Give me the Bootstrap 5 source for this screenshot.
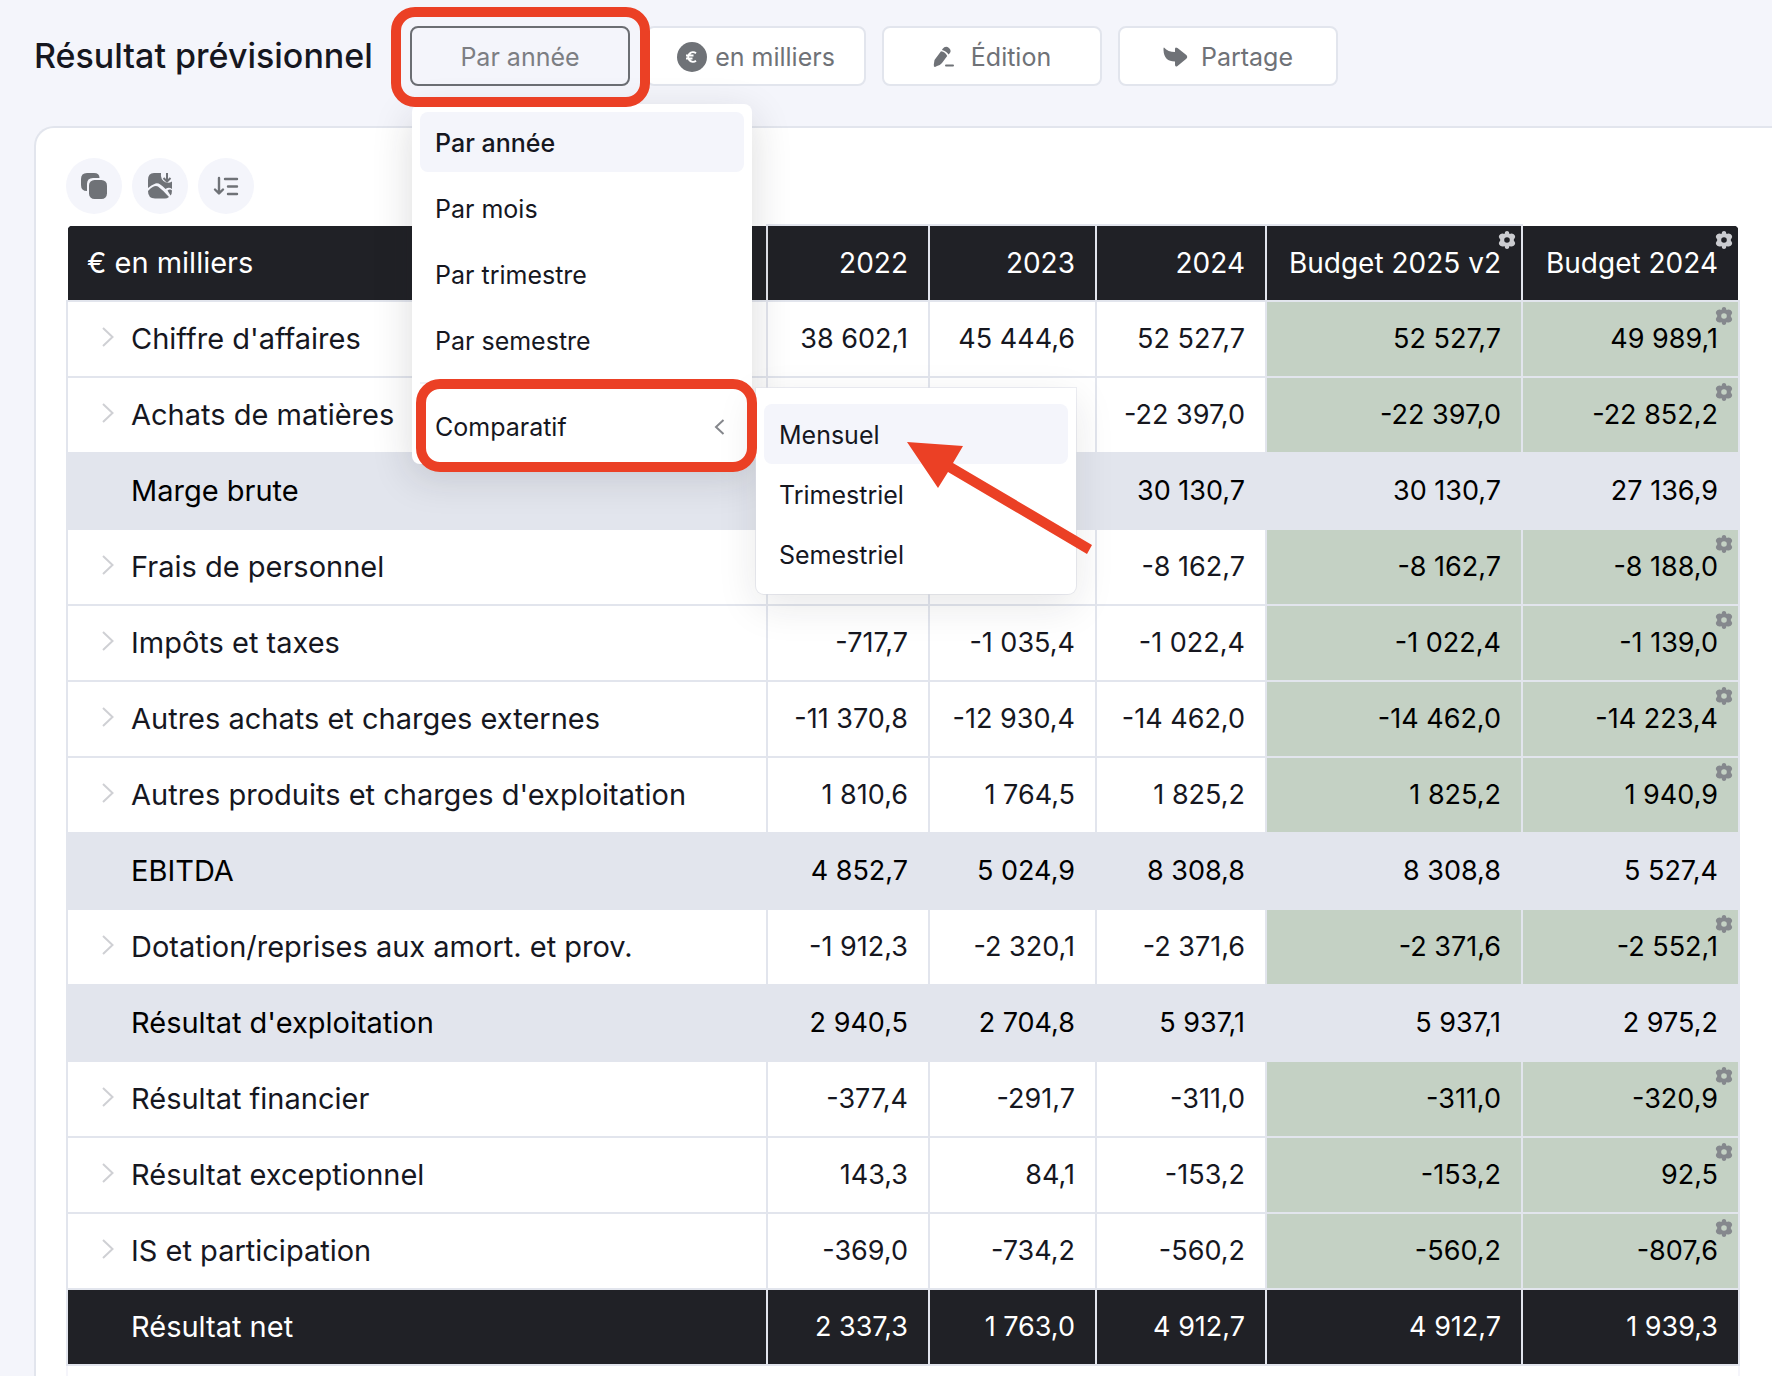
<!DOCTYPE html>
<html lang="fr">
<head>
<meta charset="utf-8">
<meta name="viewport" content="width=device-width, initial-scale=1">
<title>Résultat prévisionnel</title>
<link href="https://cdn.jsdelivr.net/npm/bootstrap@5.3.0/dist/css/bootstrap.min.css" rel="stylesheet">
<style>
:root{--ink:#16171f;--dark:#202126;--line:#e2e5ed;--soft:#f4f5fb;--grey:#6f7277;--red:#eb4025}
body{background:var(--soft);color:var(--ink);font-family:Inter,"Open Sans",sans-serif;font-size:25px;overflow-x:hidden}
.topbar{padding:26px 34px 40px}
.page-title{font-size:34px;line-height:60px;font-weight:500;margin:0 40px 0 0;width:336px;white-space:nowrap}
.tool-btn{width:220px;height:60px;border:2px solid var(--line);border-radius:8px;background:#fff;color:var(--grey);font-size:25px;line-height:36px;padding:2px 0 0;white-space:nowrap}
.tool-btn.is-open,.tool-btn.is-open:hover{background:var(--soft);border-color:#6b6e73;color:#7c7e83}
.callout{position:absolute;border:10px solid var(--red);border-radius:24px;pointer-events:none;z-index:5}
.callout-btn{inset:-19px -20px -21px -19px}
.callout-item{inset:-17px -13px -16px -4px}
.menu-panel{position:absolute;display:block;background:#fff;border:0;border-radius:8px;padding:8px;margin:0;box-shadow:0 12px 40px rgba(30,32,40,.16);list-style:none}
.menu-main{top:78px;left:2px;width:340px;z-index:4}
.menu-sub{top:-8px;left:336px;width:320px;padding:16px 8px 10px;border-radius:0 0 8px 8px;box-shadow:0 12px 40px rgba(30,32,40,.1),0 0 0 1px rgba(226,229,237,.6);z-index:4}
.menu-link{display:flex;align-items:center;height:60px;padding:2px 19px 0 15px;border-radius:8px;color:var(--ink);font-size:25px;line-height:36px;text-decoration:none}
.menu-main>li+li{margin-top:6px}
.menu-link.is-active{background:var(--soft)}
.menu-rule{height:2px;background:#f0f1f6}
.menu-main>li.menu-rule,.menu-main>li.menu-last{margin-top:12px}
.pointer{position:absolute;left:150px;top:52px;z-index:6;pointer-events:none}
.panel{margin-left:34px;border:2px solid var(--line);border-right:0;border-bottom:0;border-radius:20px 0 0 0;background:#fff;padding:30px 32px 0 30px}
.round-btn{width:56px;height:56px;border:0;border-radius:50%;background:var(--soft);color:var(--grey);padding:0;display:flex;align-items:center;justify-content:center}
.table-box{margin-top:10px;border-radius:10px 10px 0 0;overflow:hidden;padding-bottom:10px;box-shadow:inset 2px 0 #f5f5fb,inset -2px 0 #f5f5fb}
.fin{width:100%;table-layout:fixed;border-collapse:collapse;font-size:27px;line-height:40px}
.fin th,.fin td{border:2px solid var(--line);height:76px;padding:0 20px;font-weight:400;white-space:nowrap;text-align:right;position:relative;vertical-align:middle}
.fin th:first-child{text-align:left;padding-left:63px;font-size:29px}
.fin tbody td:nth-child(n+5){background:#c4d1c4;color:#000}
.fin thead th{background:var(--dark);color:#fff;font-size:28px}
.fin thead th:first-child{padding-left:19px;border-top-color:#fff;border-left-color:#fff}
.fin thead th:last-child{border-top-color:#fff;border-right-color:#fff}
.fin .sum th,.fin .sum td:nth-child(n){background:var(--line);color:#000}
.fin .net th,.fin .net td:nth-child(n){background:var(--dark);color:#fff}
.chev{position:absolute;left:33px;top:24px;color:#cfd0d4}
.gear{position:absolute;right:5px;top:5px;color:#85888d}
thead .gear{color:#cbccd0}
.c1{width:162px}.c2{width:167px}.c3{width:170px}.c4{width:256px}.c5{width:217px}
</style>
</head>
<body>
<svg class="d-none" aria-hidden="true">
<symbol id="gear" viewBox="0 0 18 18"><path fill="currentColor" fill-rule="evenodd" d="M7.2.8Q9-.6 10.8.8L11.5 3Q13.500 2 15.400 2.900Q17.500 4.200 17.100 6.300L15.600 9L17.100 11.700Q17.500 13.800 15.400 15.100Q13.500 16 11.500 15L10.800 17.200Q9 18.600 7.200 17.200L6.500 15Q4.500 16 2.600 15.100Q.5 13.800 .9 11.700L2.400 9L.9 6.300Q.5 4.200 2.600 2.900Q4.500 2 6.500 3ZM9 6.200A2.800 2.800 0 1 0 9 11.800A2.800 2.800 0 1 0 9 6.200Z"/></symbol>
<symbol id="chev" viewBox="0 0 14 22"><path d="M2 2L11.500 11L2 20" fill="none" stroke="currentColor" stroke-width="2"/></symbol>
</svg>

<header class="topbar d-flex align-items-center">
  <h1 class="page-title">Résultat prévisionnel</h1>
  <div class="d-flex gap-3">
    <div class="position-relative">
      <button type="button" class="btn tool-btn is-open" aria-expanded="true">Par année</button>
      <ul class="menu-panel menu-main">
        <li><a class="menu-link is-active fw-medium" href="#">Par année</a></li>
        <li><a class="menu-link" href="#">Par mois</a></li>
        <li><a class="menu-link" href="#">Par trimestre</a></li>
        <li><a class="menu-link" href="#">Par semestre</a></li>
        <li class="menu-rule"></li>
        <li class="menu-last position-relative">
          <a class="menu-link justify-content-between" href="#">Comparatif
            <svg width="11" height="18" viewBox="0 0 11 18"><path d="M9.500 2L2 9L9.500 16" fill="none" stroke="#85878c" stroke-width="2"/></svg>
          </a>
          <ul class="menu-panel menu-sub">
            <li><a class="menu-link is-active" href="#">Mensuel</a></li>
            <li><a class="menu-link" href="#">Trimestriel</a></li>
            <li><a class="menu-link" href="#">Semestriel</a></li>
            <li class="pointer"><svg class="d-block" width="190" height="116" viewBox="0 0 190 116"><path d="M1 2L57 6L47 23L186 105L181 114L42 32L32 48Z" fill="#eb4025"/></svg></li>
          </ul>
          <span class="callout callout-item"></span>
        </li>
      </ul>
      <span class="callout callout-btn"></span>
    </div>
    <button type="button" class="btn tool-btn d-flex align-items-center justify-content-center gap-2"><svg width="30" height="30" viewBox="0 0 30 30"><circle cx="15" cy="15" r="15" fill="#6f7277"/><path d="M19 11.200A4.800 4.800 0 1 0 19 18.800M9 13.600H16.500M9 16.400H15.500" fill="none" stroke="#fff" stroke-width="2"/></svg>en milliers</button>
    <button type="button" class="btn tool-btn d-flex align-items-center justify-content-center gap-3"><svg width="22" height="22" viewBox="0 0 22 22" fill="#6f7277"><path d="M9.500 3Q12.500-1 16 2Q19 4.500 16.500 7.500L15.500 8.500Q13.500 5 9 4Z"/><path d="M8 5.200Q12.500 6 14.200 10L9 17Q7 19.500 4 20L2 21Q.5 21 .8 18.500L1.500 14Z"/><rect x="12" y="18.500" width="9" height="2" rx="1"/></svg>Édition</button>
    <button type="button" class="btn tool-btn d-flex align-items-center justify-content-center gap-2"><svg class="me-1" width="26" height="22" viewBox="0 0 26 22"><path d="M1 1.500Q5 6 12 6V3Q12 .5 14.500 2L23 8.800Q25.500 11 23 13L14.500 20Q12 21.500 12 18.500V15.500Q1 15.500 .5 4Q.4 1 1 1.500Z" fill="#6f7277"/></svg>Partage</button>
  </div>
</header>

<main class="panel">
  <div class="d-flex" style="gap:10px">
    <button type="button" class="round-btn" aria-label="Copier"><svg width="28" height="28" viewBox="0 0 28 28" fill="currentColor"><path d="M7 1H14Q19.500 1 19.500 6H13Q7 6 7 12V19Q1 19 1 13V7Q1 1 7 1Z"/><rect x="9" y="8" width="18" height="19" rx="5.500"/></svg></button>
    <button type="button" class="round-btn" aria-label="Exporter en image"><svg width="28" height="28" viewBox="0 0 28 28"><path d="M8 1H15Q14 8 20 10.500Q23 11.500 26 9.500V17Q23 14.500 19.500 17Q13 10 9.500 11.500Q5 13 2 16V8Q2 1 8 1Z" fill="currentColor"/><path d="M2 19Q8 12.500 12 14.500Q18 19 23 25Q21 26.500 19 26.500H9Q2 26.500 2 19Z" fill="currentColor"/><path d="M21.500 18.500Q24 16.500 26 18.500Q26 22 24.500 23.500Z" fill="currentColor"/><path d="M21 1V9M17.500 6L21 9.500L24.500 6" fill="none" stroke="currentColor" stroke-width="2"/></svg></button>
    <button type="button" class="round-btn" aria-label="Trier"><svg width="28" height="22" viewBox="0 0 28 22" fill="none" stroke="currentColor" stroke-width="2.400" stroke-linecap="round" stroke-linejoin="round"><path d="M7 3V18M3 14.500L7 18.500L11 14.500M13 4H25M16 11.500H25M16 19H25"/></svg></button>
  </div>

  <div class="table-box">
  <table class="fin">
    <colgroup><col><col class="c1"><col class="c2"><col class="c3"><col class="c4"><col class="c5"></colgroup>
    <thead>
      <tr><th scope="col">€ en milliers</th><th scope="col">2022</th><th scope="col">2023</th><th scope="col">2024</th><th scope="col">Budget 2025 v2<svg class="gear" width="18" height="18"><use href="#gear"/></svg></th><th scope="col">Budget 2024<svg class="gear" width="18" height="18"><use href="#gear"/></svg></th></tr>
    </thead>
    <tbody>
      <tr><th scope="row"><svg class="chev" width="14" height="22"><use href="#chev"/></svg>Chiffre d'affaires</th><td>38 602,1</td><td>45 444,6</td><td>52 527,7</td><td>52 527,7</td><td>49 989,1<svg class="gear" width="18" height="18"><use href="#gear"/></svg></td></tr>
      <tr><th scope="row"><svg class="chev" width="14" height="22"><use href="#chev"/></svg>Achats de matières</th><td></td><td></td><td>-22 397,0</td><td>-22 397,0</td><td>-22 852,2<svg class="gear" width="18" height="18"><use href="#gear"/></svg></td></tr>
      <tr class="sum"><th scope="row">Marge brute</th><td></td><td></td><td>30 130,7</td><td>30 130,7</td><td>27 136,9</td></tr>
      <tr><th scope="row"><svg class="chev" width="14" height="22"><use href="#chev"/></svg>Frais de personnel</th><td></td><td></td><td>-8 162,7</td><td>-8 162,7</td><td>-8 188,0<svg class="gear" width="18" height="18"><use href="#gear"/></svg></td></tr>
      <tr><th scope="row"><svg class="chev" width="14" height="22"><use href="#chev"/></svg>Impôts et taxes</th><td>-717,7</td><td>-1 035,4</td><td>-1 022,4</td><td>-1 022,4</td><td>-1 139,0<svg class="gear" width="18" height="18"><use href="#gear"/></svg></td></tr>
      <tr><th scope="row"><svg class="chev" width="14" height="22"><use href="#chev"/></svg>Autres achats et charges externes</th><td>-11 370,8</td><td>-12 930,4</td><td>-14 462,0</td><td>-14 462,0</td><td>-14 223,4<svg class="gear" width="18" height="18"><use href="#gear"/></svg></td></tr>
      <tr><th scope="row"><svg class="chev" width="14" height="22"><use href="#chev"/></svg>Autres produits et charges d'exploitation</th><td>1 810,6</td><td>1 764,5</td><td>1 825,2</td><td>1 825,2</td><td>1 940,9<svg class="gear" width="18" height="18"><use href="#gear"/></svg></td></tr>
      <tr class="sum"><th scope="row">EBITDA</th><td>4 852,7</td><td>5 024,9</td><td>8 308,8</td><td>8 308,8</td><td>5 527,4</td></tr>
      <tr><th scope="row"><svg class="chev" width="14" height="22"><use href="#chev"/></svg>Dotation/reprises aux amort. et prov.</th><td>-1 912,3</td><td>-2 320,1</td><td>-2 371,6</td><td>-2 371,6</td><td>-2 552,1<svg class="gear" width="18" height="18"><use href="#gear"/></svg></td></tr>
      <tr class="sum"><th scope="row">Résultat d'exploitation</th><td>2 940,5</td><td>2 704,8</td><td>5 937,1</td><td>5 937,1</td><td>2 975,2</td></tr>
      <tr><th scope="row"><svg class="chev" width="14" height="22"><use href="#chev"/></svg>Résultat financier</th><td>-377,4</td><td>-291,7</td><td>-311,0</td><td>-311,0</td><td>-320,9<svg class="gear" width="18" height="18"><use href="#gear"/></svg></td></tr>
      <tr><th scope="row"><svg class="chev" width="14" height="22"><use href="#chev"/></svg>Résultat exceptionnel</th><td>143,3</td><td>84,1</td><td>-153,2</td><td>-153,2</td><td>92,5<svg class="gear" width="18" height="18"><use href="#gear"/></svg></td></tr>
      <tr><th scope="row"><svg class="chev" width="14" height="22"><use href="#chev"/></svg>IS et participation</th><td>-369,0</td><td>-734,2</td><td>-560,2</td><td>-560,2</td><td>-807,6<svg class="gear" width="18" height="18"><use href="#gear"/></svg></td></tr>
      <tr class="net"><th scope="row">Résultat net</th><td>2 337,3</td><td>1 763,0</td><td>4 912,7</td><td>4 912,7</td><td>1 939,3</td></tr>
    </tbody>
  </table>
  </div>
</main>
<script src="https://cdn.jsdelivr.net/npm/bootstrap@5.3.0/dist/js/bootstrap.bundle.min.js"></script>
</body>
</html>
